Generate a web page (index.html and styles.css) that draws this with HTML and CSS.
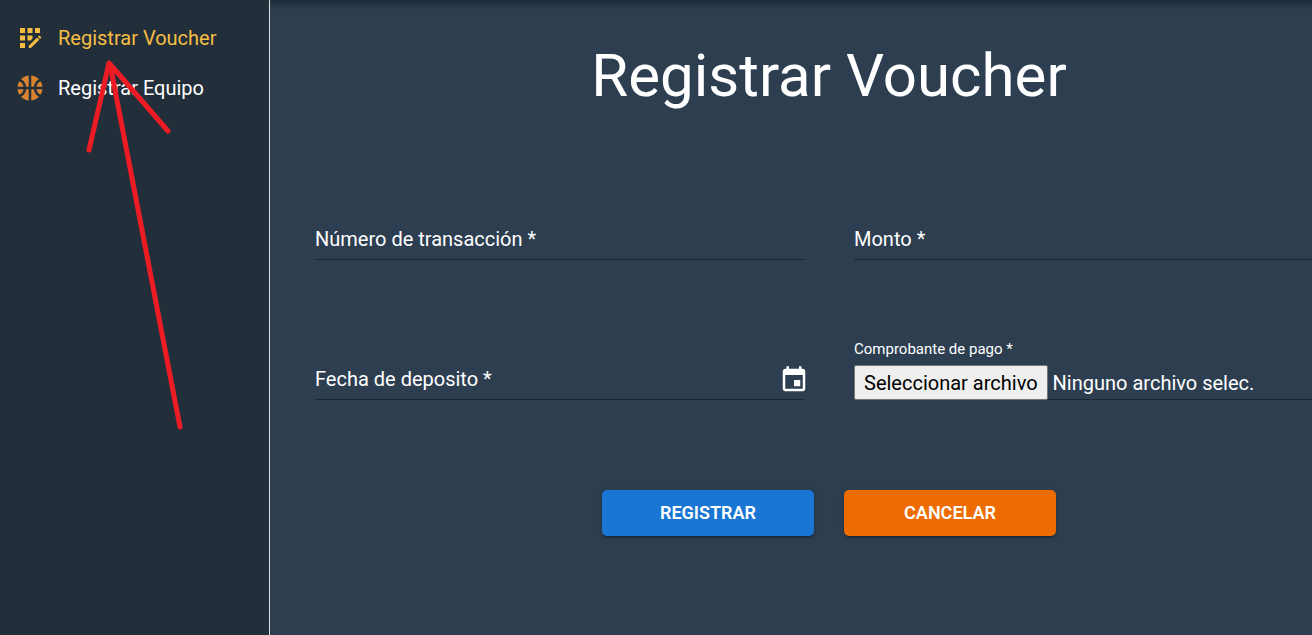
FILE: index.html
```html
<!DOCTYPE html>
<html lang="es">
<head>
<meta charset="utf-8">
<title>Registrar Voucher</title>
<link rel="stylesheet" href="styles.css">
</head>
<body>
<div class="app">
  <nav class="sidebar">
    <a class="nav-item nav-item--active" href="#voucher">
      <svg class="icon" viewBox="0 0 24 24" aria-hidden="true"><path d="M10 4h4v4h-4zM4 16h4v4H4zM4 10h4v4H4zM4 4h4v4H4zM14 12.42V10h-4v4h2.42zM20.88 11.29l-1.17-1.17c-.16-.16-.42-.16-.58 0l-.88.88L20 12.75l.88-.88c.16-.16.16-.42 0-.58zM11 18.25V20h1.75l6.67-6.67-1.75-1.75zM16 4h4v4h-4z"/></svg>
      <span>Registrar Voucher</span>
    </a>
    <a class="nav-item" href="#equipo">
      <svg class="icon icon--ball" viewBox="0 0 24 24" aria-hidden="true"><path d="M17.09 11h4.86c-.16-1.61-.71-3.11-1.54-4.4-1.73.83-2.99 2.45-3.32 4.4zM6.91 11c-.33-1.95-1.59-3.57-3.32-4.4-.83 1.29-1.38 2.79-1.54 4.4h4.86zM15.07 11c.32-2.59 1.88-4.79 4.06-6-1.6-1.63-3.74-2.71-6.13-2.95V11h2.07zM8.93 11H11V2.05C8.61 2.29 6.46 3.37 4.87 5c2.18 1.21 3.74 3.41 4.06 6zM15.07 13H13v8.95c2.39-.24 4.54-1.32 6.13-2.95-2.18-1.21-3.74-3.41-4.06-6zM3.59 17.4c1.72-.83 2.99-2.46 3.32-4.4H2.05c.16 1.61.71 3.11 1.54 4.4zM17.09 13c.33 1.95 1.59 3.57 3.32 4.4.83-1.29 1.38-2.79 1.54-4.4h-4.86zM8.93 13c-.32 2.59-1.88 4.79-4.06 6 1.6 1.63 3.74 2.71 6.13 2.95V13H8.93z"/></svg>
      <span>Registrar Equipo</span>
    </a>
  </nav>
  <main class="main">
    <form class="form">
      <h1 class="title">Registrar Voucher</h1>
      <div class="fields">
        <div class="field">
          <label class="field-label" for="numero">Número de transacción *</label>
          <input class="field-input" id="numero" type="text" required>
        </div>
        <div class="field">
          <label class="field-label" for="monto">Monto *</label>
          <input class="field-input" id="monto" type="text" required>
        </div>
        <div class="field">
          <label class="field-label" for="fecha">Fecha de deposito *</label>
          <input class="field-input" id="fecha" type="text" required>
          <button class="date-button" type="button" aria-label="Elegir fecha">
            <svg class="icon" viewBox="0 0 24 24" aria-hidden="true"><path d="M17 12h-5v5h5v-5zM16 1v2H8V1H6v2H5c-1.11 0-1.99.9-1.99 2L3 19c0 1.1.89 2 2 2h14c1.1 0 2-.9 2-2V5c0-1.1-.9-2-2-2h-1V1h-2zm3 18H5V8h14v11z"/></svg>
          </button>
        </div>
        <div class="field field--file">
          <label class="file-caption" for="comprobante">Comprobante de pago *</label>
          <div class="file-row">
            <input class="file-input" id="comprobante" type="file" required>
            <label class="file-button" for="comprobante">Seleccionar archivo</label>
            <span>Ninguno archivo selec.</span>
          </div>
        </div>
      </div>
      <div class="actions">
        <button class="button button--primary" type="submit">REGISTRAR</button>
        <button class="button button--cancel" type="reset">CANCELAR</button>
      </div>
    </form>
  </main>
</div>
<svg class="arrow" viewBox="0 0 200 440" aria-hidden="true"><path d="M180 427 110 64M89 150 109 63 168 131"/></svg>
</body>
</html>
```

FILE: styles.css
```css
* { box-sizing: border-box; }

body {
  margin: 0;
  font: 20px/24px Roboto, sans-serif;
  color: #fff;
  background: #2d3e50;
}

.app {
  display: flex;
  min-height: 100vh;
  overflow: hidden;
}

.sidebar {
  flex: 0 0 270px;
  padding: 13px 15px;
  background: #222f3b;
  border-right: 1px solid #e0e0e0;
}

.nav-item {
  display: flex;
  align-items: center;
  gap: 13px;
  height: 50px;
  color: #fff;
  text-decoration: none;
}

.nav-item--active { color: #f5bd42; }

.icon {
  display: block;
  width: 30px;
  height: 30px;
  fill: currentColor;
}

.icon--ball { color: #d9822f; }

.main {
  flex: 1;
  min-width: 0;
  background: linear-gradient(#1f2b3b, #2d3e50 10px);
}

/* The form is wider than the viewport area and runs off its right edge. */
.form {
  width: calc(100% + 76px);
  padding: 40px 45px;
}

.title {
  margin: 0;
  font-size: 60px;
  line-height: 72px;
  font-weight: 400;
  text-align: center;
}

.fields {
  display: grid;
  grid-template-columns: 1fr 1fr;
  gap: 80px 50px;
  margin-top: 88px;
}

.field {
  display: grid;
  grid-template-columns: 1fr auto;
  align-items: end;
  height: 60px;
  border-bottom: 1px solid #1b2733;
}

.field-label {
  grid-area: 1 / 1;
  padding-bottom: 8px;
}

.field-input {
  grid-area: 1 / 1;
  width: 100%;
  height: 40px;
  padding: 0;
  border: 0;
  outline: 0;
  background: none;
  color: inherit;
  font: inherit;
}

.date-button {
  grid-area: 1 / 2;
  margin-right: -5px;
  padding: 0 0 4px;
  border: 0;
  background: none;
  color: inherit;
}

.field--file {
  grid-template-columns: 1fr;
  align-content: end;
  gap: 6px;
}

.file-caption {
  font-size: 15px;
  line-height: 20px;
}

.file-row {
  position: relative;
  display: flex;
  align-items: center;
  gap: 5px;
  margin-bottom: -1px;
}

.file-input {
  position: absolute;
  width: 1px;
  height: 1px;
  opacity: 0;
}

.file-button {
  height: 35px;
  padding: 0 9px;
  border: 1px solid #767676;
  border-radius: 2px;
  background: #efefef;
  color: #000;
  line-height: 34px;
}

.actions {
  display: flex;
  justify-content: center;
  gap: 30px;
  margin-top: 90px;
}

.button {
  width: 212px;
  height: 46px;
  padding: 0;
  border: 0;
  border-radius: 5px;
  color: #fff;
  font: 600 18px/24px Roboto, sans-serif;
  box-shadow: 0 3px 1px -2px rgba(0, 0, 0, .2), 0 2px 2px rgba(0, 0, 0, .14), 0 1px 5px rgba(0, 0, 0, .12);
}

.button--primary { background: #1976d2; }
.button--cancel { background: #ed6c02; }

.arrow {
  position: absolute;
  top: 0;
  left: 0;
  width: 200px;
  height: 440px;
  fill: none;
  stroke: #ed1c24;
  stroke-width: 5;
  stroke-linecap: round;
  stroke-linejoin: round;
  pointer-events: none;
}
```
